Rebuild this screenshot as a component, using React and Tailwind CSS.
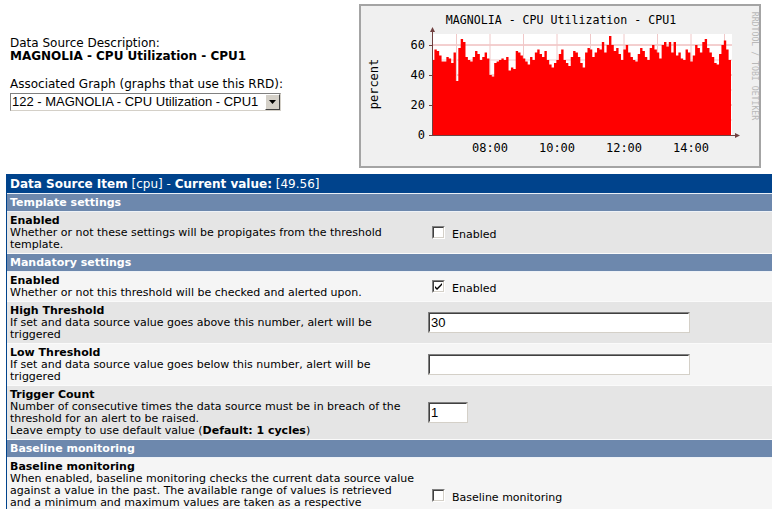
const values = [50,57,56,53,49,49,52,51,48,55,36,58,64,62,52,50,49,52,56,54,50,52,55,51,40,39,48,49,50,51,50,52,43,45,44,56,55,53,51,49,47,52,50,55,57,54,52,56,50,47,45,48,50,54,57,50,48,46,52,56,55,52,48,45,55,58,57,52,55,58,57,62,55,60,66,60,56,58,54,50,57,60,55,52,50,49,54,58,56,52,50,58,60,57,55,51,60,62,59,62,55,62,53,55,51,50,57,55,49,53,60,58,55,62,64,58,55,52,48,47,54,60,63,57,50];

function CpuGraph() {
    const x0 = 432;
    const x1 = 731;
    const y0 = 135;
    const step = (x1 - x0) / values.length;
    let d = `M${x0} ${y0}`;
    values.forEach((v, i) => {
        const y = y0 - v * 1.5;
        d += ` L${x0 + i * step} ${y} L${x0 + (i + 1) * step} ${y}`;
    });
    d += ` L${x1} ${y0} Z`;

    const hours = [456.5, 490, 523.5, 557, 590.5, 624, 657.5, 691, 724.5];
    const labels = [["08:00", 490], ["10:00", 557], ["12:00", 624], ["14:00", 691]];
    const mono = "'DejaVu Sans Mono', monospace";

    return (
        <svg width="402" height="164" viewBox="359 4 402 164" className="block">
            <rect x="432" y="34" width="300" height="101" fill="#ffffff" />
            {[10, 20, 30, 40, 50, 60].map((v) => (
                <line key={v} x1="432" x2="732" y1={y0 - v * 1.5} y2={y0 - v * 1.5}
                    stroke={v % 20 === 0 ? "#e8a0a0" : "#f0d0d0"} strokeWidth="1" />
            ))}
            {hours.map((h) => (
                <line key={h} x1={h} x2={h} y1="34" y2="135" stroke="#f0c8c8" strokeWidth="1" />
            ))}
            <path d={d} fill="#ff0000" />
            <line x1="432.5" y1="136" x2="432.5" y2="30" stroke="#704040" strokeWidth="1" />
            <path d="M430 32 L432.5 27 L435 32 Z" fill="#704040" />
            <line x1="429" y1="135.5" x2="737" y2="135.5" stroke="#704040" strokeWidth="1" />
            <path d="M735 133 L740 135.5 L735 138 Z" fill="#704040" />
            {[0, 20, 40, 60].map((v) => (
                <g key={v}>
                    <line x1="429" x2="432" y1={y0 - v * 1.5 + 0.5} y2={y0 - v * 1.5 + 0.5} stroke="#704040" />
                    <text x="425" y={y0 - v * 1.5 + 4} textAnchor="end" fontSize="12" fontFamily={mono} fill="#000">{v}</text>
                </g>
            ))}
            {labels.map(([t, x]) => (
                <text key={t} x={x} y="152" textAnchor="middle" fontSize="12" fontFamily={mono} fill="#000">{t}</text>
            ))}
            <text x="561" y="24" textAnchor="middle" fontSize="11.6" fontFamily={mono} fill="#000">MAGNOLIA - CPU Utilization - CPU1</text>
            <text x="378" y="84" textAnchor="middle" fontSize="12" fontFamily={mono} fill="#000" transform="rotate(-90 378 84)">percent</text>
            <text x="752" y="66" textAnchor="middle" fontSize="8.2" fontFamily={mono} fill="#b8b8b8" transform="rotate(90 752 66)">RRDTOOL / TOBI OETIKER</text>
        </svg>
    );
}

function Checkbox({ checked }) {
    return (
        <span className="inline-block w-[13px] h-[13px] border border-t-[#808080] border-l-[#808080] border-b-white border-r-white bg-white align-middle">
            <span className="flex w-full h-full border border-t-[#404040] border-l-[#404040] border-b-[#d4d0c8] border-r-[#d4d0c8] items-center justify-center">
                {checked && (
                    <svg width="7" height="7" viewBox="0 0 7 7">
                        <path d="M0 3 L0 5 L2 7 L7 2 L7 0 L2 5 Z" fill="#000" />
                    </svg>
                )}
            </span>
        </span>
    );
}

function TextInput({ value, width }) {
    return (
        <div className={`${width} h-[21px] border border-t-[#808080] border-l-[#808080] border-b-[#d4d0c8] border-r-[#d4d0c8] bg-white`}>
            <div className="h-full border border-t-[#404040] border-l-[#404040] border-b-white border-r-white px-[1px] text-[13px] leading-[17px] font-['Liberation_Sans',sans-serif]">
                {value}
            </div>
        </div>
    );
}

function SectionHeader({ children }) {
    return (
        <div className="bg-[#6d88ad] text-white font-bold text-[11px] leading-[12px] px-[3px] pt-[3px] pb-[2px] border-b border-[#eef2f7]">
            {children}
        </div>
    );
}

function Row({ shade, title, children, field }) {
    return (
        <div className={`flex items-center border-b border-[#fafafa] ${shade ? "bg-[#e5e5e5]" : "bg-[#f5f5f5]"}`}>
            <div className="w-[421px] shrink-0 px-[3px] pt-[3px] pb-[2px] text-[11px] leading-[12px] whitespace-nowrap">
                <div className="font-bold">{title}</div>
                {children}
            </div>
            <div className="flex items-center">{field}</div>
        </div>
    );
}

function CheckField({ checked, label }) {
    return (
        <div className="flex items-center pl-[4px]">
            <Checkbox checked={checked} />
            <span className="ml-[7px] mt-[5px] text-[11px]">{label}</span>
        </div>
    );
}

export default function App() {
    return (
        <div className="w-[772px] h-[509px] overflow-hidden bg-white text-black font-['DejaVu_Sans',sans-serif]">
            <div className="flex items-start">
                <div className="w-[359px] shrink-0 pl-[10px] pt-[37px]">
                    <div className="text-[12px] leading-[13px]">Data Source Description:</div>
                    <div className="text-[12px] leading-[13px] font-bold">MAGNOLIA - CPU Utilization - CPU1</div>
                    <div className="mt-[15px] text-[12px] leading-[13px]">Associated Graph (graphs that use this RRD):</div>
                    <div className="mt-[2px] w-[271px] h-[18px] flex border border-t-[#808080] border-l-[#808080] border-b-[#d4d0c8] border-r-[#d4d0c8] bg-white">
                        <div className="flex-1 pl-[1px] text-[13px] leading-[16px] font-['Liberation_Sans',sans-serif] whitespace-nowrap overflow-hidden">
                            122 - MAGNOLIA - CPU Utilization - CPU1
                        </div>
                        <div className="w-[15px] h-[16px] bg-[#d4d0c8] border border-t-white border-l-white border-b-[#404040] border-r-[#404040] flex items-center justify-center">
                            <svg width="7" height="4" viewBox="0 0 7 4"><path d="M0 0 L7 0 L3.5 4 Z" fill="#000" /></svg>
                        </div>
                    </div>
                </div>
                <div className="mt-[4px] border-2 border-[#a4a4a4] bg-[#f0f0f0] w-[402px] h-[164px] overflow-hidden">
                    <div className="-m-[2px]">
                        <CpuGraph />
                    </div>
                </div>
            </div>

            <div className="mt-[6px] ml-[6px] w-[780px] border-l border-[#00438c]">
                <div className="bg-[#00438c] text-white text-[12px] leading-[14px] px-[3px] pt-[3px] pb-[2px] border-b border-[#e8eef6]">
                    <b>Data Source Item</b> [cpu] - <b>Current value:</b> [49.56]
                </div>
                <SectionHeader>Template settings</SectionHeader>
                <Row shade title="Enabled" field={<CheckField label="Enabled" />}>
                    Whether or not these settings will be propigates from the threshold<br />template.
                </Row>
                <SectionHeader>Mandatory settings</SectionHeader>
                <Row title="Enabled" field={<CheckField checked label="Enabled" />}>
                    Whether or not this threshold will be checked and alerted upon.
                </Row>
                <Row shade title="High Threshold" field={<TextInput value="30" width="w-[262px]" />}>
                    If set and data source value goes above this number, alert will be<br />triggered
                </Row>
                <Row title="Low Threshold" field={<TextInput value="" width="w-[262px]" />}>
                    If set and data source value goes below this number, alert will be<br />triggered
                </Row>
                <Row shade title="Trigger Count" field={<TextInput value="1" width="w-[40px]" />}>
                    Number of consecutive times the data source must be in breach of the<br />
                    threshold for an alert to be raised.<br />
                    Leave empty to use default value (<b>Default: 1 cycles</b>)
                </Row>
                <SectionHeader>Baseline monitoring</SectionHeader>
                <Row title="Baseline monitoring" field={<div className="pt-[22px]"><CheckField label="Baseline monitoring" /></div>}>
                    When enabled, baseline monitoring checks the current data source value<br />
                    against a value in the past. The available range of values is retrieved<br />
                    and a minimum and maximum values are taken as a respective
                </Row>
            </div>
        </div>
    );
}
